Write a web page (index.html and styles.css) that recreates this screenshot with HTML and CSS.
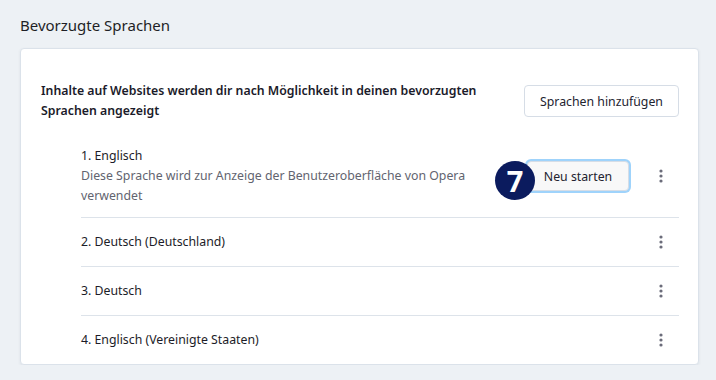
FILE: index.html
```html
<!DOCTYPE html>
<html>
<head>
    <title>Bevorzugte Sprachen</title>
    <link rel="stylesheet" href="styles.css">
</head>
<body>
    <h2 class="section-title">Bevorzugte Sprachen</h2>

    <div class="card">
        <div class="card-header">
            <p class="card-desc">Inhalte auf Websites werden dir nach Möglichkeit in deinen bevorzugten Sprachen angezeigt</p>
            <button class="btn">Sprachen hinzufügen</button>
        </div>

        <ul class="lang-list">
            <li class="lang-row first">
                <div class="lang-text">
                    <div class="lang-name">1. Englisch</div>
                    <div class="lang-note">Diese Sprache wird zur Anzeige der Benutzeroberfläche von Opera verwendet</div>
                </div>
                <div class="lang-actions">
                    <div class="restart-wrap">
                        <span class="step-badge">7</span>
                        <button class="btn btn-focus">Neu starten</button>
                    </div>
                    <button class="kebab" aria-label="Mehr"><svg width="4" height="14" viewBox="0 0 4 14"><circle cx="2" cy="2" r="1.6"/><circle cx="2" cy="7" r="1.6"/><circle cx="2" cy="12" r="1.6"/></svg></button>
                </div>
            </li>
            <li class="lang-row">
                <div class="lang-text"><div class="lang-name">2. Deutsch (Deutschland)</div></div>
                <div class="lang-actions">
                    <button class="kebab" aria-label="Mehr"><svg width="4" height="14" viewBox="0 0 4 14"><circle cx="2" cy="2" r="1.6"/><circle cx="2" cy="7" r="1.6"/><circle cx="2" cy="12" r="1.6"/></svg></button>
                </div>
            </li>
            <li class="lang-row">
                <div class="lang-text"><div class="lang-name">3. Deutsch</div></div>
                <div class="lang-actions">
                    <button class="kebab" aria-label="Mehr"><svg width="4" height="14" viewBox="0 0 4 14"><circle cx="2" cy="2" r="1.6"/><circle cx="2" cy="7" r="1.6"/><circle cx="2" cy="12" r="1.6"/></svg></button>
                </div>
            </li>
            <li class="lang-row">
                <div class="lang-text"><div class="lang-name">4. Englisch (Vereinigte Staaten)</div></div>
                <div class="lang-actions">
                    <button class="kebab" aria-label="Mehr"><svg width="4" height="14" viewBox="0 0 4 14"><circle cx="2" cy="2" r="1.6"/><circle cx="2" cy="7" r="1.6"/><circle cx="2" cy="12" r="1.6"/></svg></button>
                </div>
            </li>
        </ul>
    </div>
</body>
</html>
```

FILE: styles.css
```css
body { margin: 0; padding: 15px 17px 0 20px; background: #edf1f5; font-family: "Noto Sans", "Open Sans", sans-serif; font-size: 12.3px; color: #1c1c28; line-height: 20px; }
.section-title { margin: 0 0 13px; font-size: 15px; font-weight: 400; line-height: 20px; color: #1e1f26; }

.card { background: #fff; border: 1px solid #dbe2ea; border-radius: 4px; box-shadow: 0 1px 3px rgba(40, 60, 90, 0.08); padding: 32px 19px 0 20px; }
.card-header { display: flex; align-items: center; justify-content: space-between; margin-bottom: 11px; }
.card-desc { margin: 0; width: 460px; font-weight: 600; color: #1b1b2a; }

.btn { font-family: inherit; font-size: 12.3px; color: #23232f; background: #fff; border: 1px solid #d6dde6; border-radius: 4px; height: 32px; width: 155px; padding: 0; cursor: pointer; }
.btn-focus { background: #f8f8f8; height: 30px; width: 102px; box-shadow: 0 0 0 2px #9fd3fb; }

.lang-list { list-style: none; margin: 0; padding: 0 0 0 40px; }
.lang-row { display: flex; align-items: center; justify-content: space-between; height: 48px; border-top: 1px solid #dde3ea; }
.lang-row.first { height: auto; border-top: none; padding: 14px 0 11px; }
.lang-note { color: #62646f; width: 400px; }

.lang-actions { display: flex; align-items: center; gap: 20px; }
.restart-wrap { position: relative; }
.step-badge { position: absolute; left: -32px; top: 0; width: 40px; height: 39px; border-radius: 50%; background: #0b1b5e; color: #fff; font-size: 29px; font-weight: 700; line-height: 39px; text-align: center; z-index: 1; }
.kebab { width: 24px; height: 24px; margin-right: 6px; border: none; background: none; padding: 0; display: flex; align-items: center; justify-content: center; fill: #6b6c7a; cursor: pointer; }
```
